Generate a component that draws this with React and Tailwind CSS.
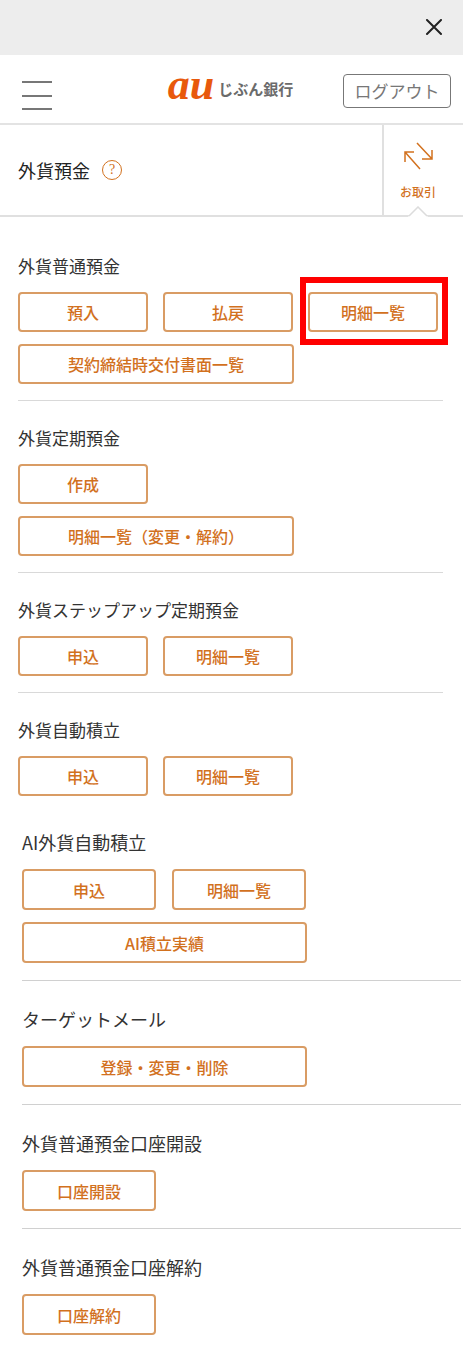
const depositSections = [
  {
    title: '外貨普通預金',
    rows: [
      [{ label: '預入' }, { label: '払戻' }, { label: '明細一覧', highlighted: true }],
      [{ label: '契約締結時交付書面一覧', wide: true }],
    ],
  },
  {
    title: '外貨定期預金',
    rows: [[{ label: '作成' }], [{ label: '明細一覧（変更・解約）', wide: true }]],
  },
  {
    title: '外貨ステップアップ定期預金',
    rows: [[{ label: '申込' }, { label: '明細一覧' }]],
  },
  {
    title: '外貨自動積立',
    rows: [[{ label: '申込' }, { label: '明細一覧' }]],
  },
];

const otherSections = [
  {
    title: 'AI外貨自動積立',
    rows: [[{ label: '申込' }, { label: '明細一覧' }], [{ label: 'AI積立実績', wide: true }]],
  },
  {
    title: 'ターゲットメール',
    rows: [[{ label: '登録・変更・削除', wide: true }]],
  },
  {
    title: '外貨普通預金口座開設',
    rows: [[{ label: '口座開設' }]],
  },
  {
    title: '外貨普通預金口座解約',
    rows: [[{ label: '口座解約' }]],
  },
];

function ActionButton({ label, wide, highlighted, large }) {
  const width = large
    ? (wide ? 'w-[285px] h-[41px]' : 'w-[134px] h-[41px]')
    : (wide ? 'w-[276px] h-10' : 'w-[130px] h-10');

  return (
    <div className="relative">
      <button
        type="button"
        className={`${width} flex items-center justify-center rounded border-2 border-[#d99c64] bg-white text-base font-medium text-[#d2711e]`}
      >
        {label}
      </button>
      {highlighted && (
        <span className="pointer-events-none absolute -top-[15px] -right-[10px] -bottom-[13px] -left-2 border-6 border-[#ff0000]" />
      )}
    </div>
  );
}

function Section({ title, rows, large }) {
  return (
    <section className={large ? 'pt-[26px] pb-[17px]' : 'pt-[25px] pb-4'}>
      <h2 className={`leading-6 text-[#333] ${large ? 'text-lg' : 'text-[17px]'}`}>{title}</h2>
      <div className={`flex flex-col gap-3 ${large ? 'mt-[15px]' : 'mt-[14px]'}`}>
        {rows.map((row, i) => (
          <div key={i} className={`flex ${large ? 'gap-4' : 'gap-[15px]'}`}>
            {row.map((button) => (
              <ActionButton key={button.label} {...button} large={large} />
            ))}
          </div>
        ))}
      </div>
    </section>
  );
}

function Header() {
  return (
    <header className="grid h-[70px] grid-cols-[1fr_auto_1fr] items-center border-b-2 border-[#e3e3e3] pr-3 pl-[22px]">
      <button type="button" aria-label="メニュー" className="mt-3 text-[#777]">
        <svg width="30" height="30" viewBox="0 0 30 30" stroke="currentColor" strokeWidth="2">
          <path d="M0 2h30M0 16h30M0 29h30" />
        </svg>
      </button>

      <a href="#" className="flex items-center gap-1 pr-3">
        <span className="-mt-2 font-['Liberation_Serif',serif] text-[44px] leading-10 font-bold text-[#e8590c] italic">au</span>
        <span className="text-[15px] leading-6 font-bold text-[#6b6b6b]">じぶん銀行</span>
      </a>

      <button
        type="button"
        className="mt-1 flex h-[34px] w-[108px] items-center justify-center justify-self-end rounded border border-[#777] text-[17px] text-[#777]"
      >
        ログアウト
      </button>
    </header>
  );
}

function TitleBar() {
  return (
    <div className="flex h-[92px] border-b-2 border-[#e0e0e0]">
      <div className="flex flex-1 items-center gap-3 pl-[18px]">
        <h1 className="text-lg text-[#222]">外貨預金</h1>
        <button
          type="button"
          aria-label="ヘルプ"
          className="flex size-5 items-center justify-center rounded-full border border-[#d2711e] font-['Liberation_Serif',serif] text-sm leading-4 text-[#d2711e]"
        >
          ?
        </button>
      </div>

      <a href="#" className="relative flex w-[81px] flex-col items-center border-l-2 border-[#e0e0e0] pt-[17px] pr-[11px] text-[#d2711e]">
        <svg width="30" height="28" viewBox="0 0 30 28" fill="none" stroke="currentColor" strokeWidth="1.5">
          <path d="M14 1l15 16M29 8v9H19M17 27L2 10M2 20V10h9" />
        </svg>
        <span className="mt-3 text-xs leading-5 font-medium">お取引</span>
        <svg width="20" height="11" viewBox="0 0 20 11" className="absolute -bottom-[2px] left-[24px]">
          <path d="M0 11L10 1l10 10z" fill="#fff" />
          <path d="M1 10l9-9 9 9" fill="none" stroke="#dcdcdc" strokeWidth="1.5" />
        </svg>
      </a>
    </div>
  );
}

function App() {
  return (
    <div className="bg-white font-['Noto_Sans_CJK_JP',sans-serif]">
      <div className="flex h-[55px] items-center justify-end bg-[#ededed] pr-5">
        <button type="button" aria-label="閉じる" className="text-[#222]">
          <svg width="18" height="18" viewBox="0 0 18 18" stroke="currentColor" strokeWidth="2" strokeLinecap="round">
            <path d="M2 1l14 14M16 1L2 15" />
          </svg>
        </button>
      </div>

      <Header />
      <TitleBar />

      <main>
        <div className="divide-y divide-[#d9d9d9] pt-3 pr-5 pl-[18px]">
          {depositSections.map((section) => (
            <Section key={section.title} {...section} />
          ))}
        </div>
        <div className="-mt-2 divide-y divide-[#d0d0d0] pr-[2px] pl-[22px]">
          {otherSections.map((section) => (
            <Section key={section.title} {...section} large />
          ))}
        </div>
      </main>
    </div>
  );
}

export default App;
